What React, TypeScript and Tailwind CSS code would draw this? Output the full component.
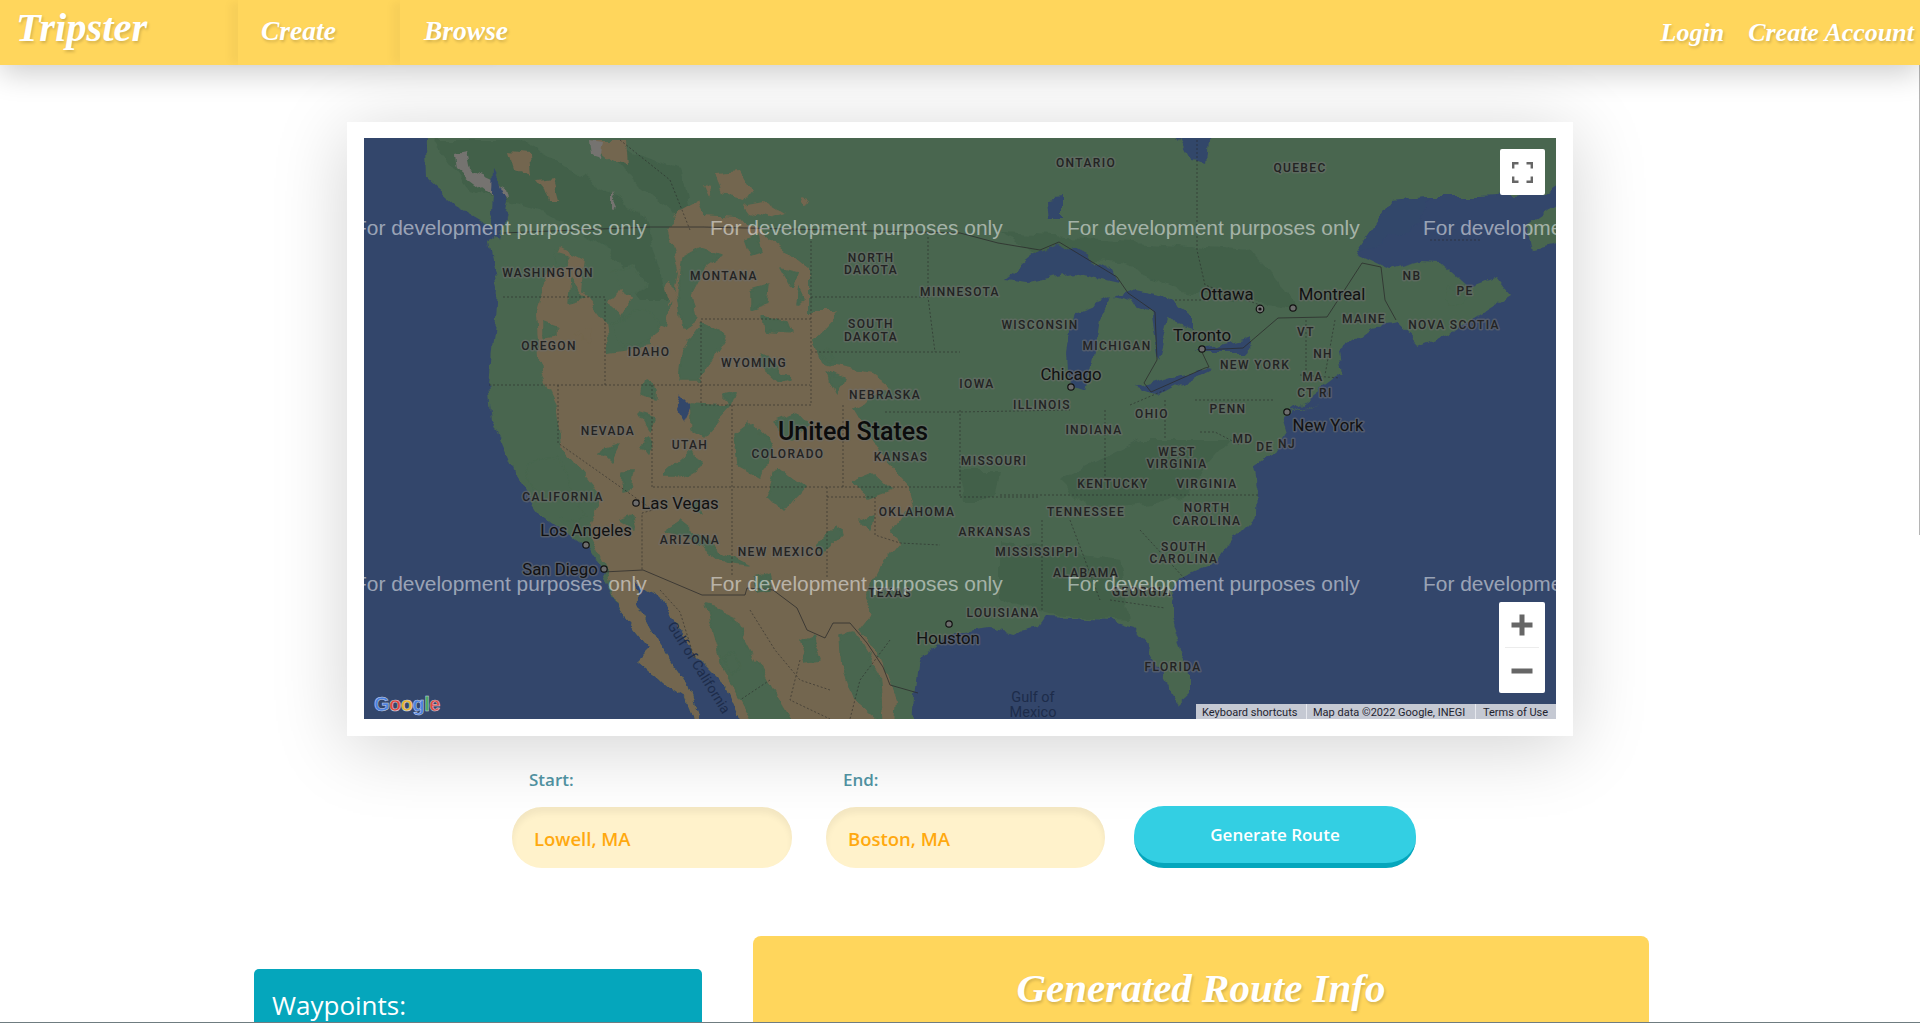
import React from "react";

const SCRIPT = { fontFamily: '"Liberation Serif", serif' };
const UI = { fontFamily: '"Open Sans", "Noto Sans", sans-serif' };

const ext = (pts: string) =>
  pts
    .split(" ")
    .map((p) => {
      const [x, y] = p.split(",").map(Number);
      return `${x >= 1556 ? 1580 : x},${y >= 719 ? 745 : y <= 138 ? 115 : y}`;
    })
    .join(" ");

const LAND = ext("426,138 428,180 458,207 503,233 487,245 497,287 495,320 489,383 493,420 510,460 520,483 540,513 567,533 587,547 603,573 620,613 650,650 638,662 667,687 687,700 700,719 707,719 687,683 660,643 637,600 633,580 643,590 663,600 677,630 697,657 727,687 750,719 910,719 913,697 917,667 923,653 950,633 987,627 1013,632 1040,627 1047,617 1110,620 1133,627 1150,647 1157,663 1177,705 1190,693 1190,673 1170,620 1170,600 1180,577 1217,560 1233,537 1257,513 1258,490 1253,467 1273,453 1287,430 1283,417 1320,400 1289,413 1343,373 1339,353 1373,327 1396,323 1419,347 1450,333 1511,295 1496,277 1469,287 1442,263 1419,262 1390,270 1354,253 1392,200 1430,197 1480,197 1545,193 1556,170 1556,138");

const TAN = ext("681,210 699,200 707,217 748,220 781,247 809,270 809,313 838,313 813,340 822,363 871,373 891,387 853,407 883,457 910,487 913,500 893,533 900,543 880,567 863,600 870,617 860,630 883,663 897,700 893,719 750,719 727,687 697,657 677,630 663,600 643,590 633,580 637,600 660,643 687,683 707,719 700,719 687,700 667,687 638,662 650,650 620,613 603,563 587,530 600,497 563,450 556,407 540,373 536,313 544,287 560,247 585,260 581,290 605,323 609,353 650,347 650,320 667,327 679,273 667,230");

const TAN_PATCHES = [
  "511,153 528,155 530,175 516,170",
  "536,180 552,178 558,200 548,200 544,190",
  "593,140 626,140 628,165 612,160 600,150",
  "715,172 740,170 752,190 745,200 722,195",
  "744,204 765,200 786,213 770,218 750,212",
  "703,184 712,186 708,195",
  "800,196 810,198 806,206",
  "610,300 625,285 632,300 620,318",
  "575,335 590,330 592,345",
  "665,290 672,280 676,300 668,305",
];
const GRAY = ["456,152 466,150 470,170 492,180 508,190 510,198 490,195 470,180 458,170", "590,140 605,142 602,158 592,155", "612,192 618,205 612,210"];
const GREEN_PATCHES = [
  "683,257 700,248 722,255 707,265 691,296 696,318 683,327 678,295",
  "701,322 726,335 715,353 699,380 680,380 684,345",
  "764,353 789,380 780,383 760,365",
  "762,316 786,322 790,332 764,330",
  "750,292 770,286 768,302 750,308",
  "609,325 640,310 660,322 648,342 622,346",
  "555,252 568,256 564,268 553,270",
  "545,322 556,326 556,336 545,338",
  "645,378 658,386 658,398 642,394",
  "735,435 750,424 772,445 760,478 738,466",
  "778,468 804,488 783,513 768,498",
  "663,477 693,450 700,463 677,477",
  "690,404 730,406 702,436 690,428",
  "600,450 618,444 610,460",
  "665,530 680,520 718,550 750,566 725,563 690,536",
  "704,605 731,612 760,667 793,725 755,725 722,667",
  "840,635 855,632 880,673 884,725 855,700 842,667",
  "524,462 558,456 572,490 586,518 565,522 532,490",
  "850,482 872,473 890,490 868,498",
  "623,472 634,472 631,488 622,490",
  "817,545 838,524 842,535 822,556",
  "772,422 798,412 812,428 790,438",
  "612,272 634,266 646,284 628,296",
  "830,372 843,379 838,393",
  "570,278 583,298 568,302",
  "799,287 805,299 796,303",
  "722,657 733,652 742,668 730,672",
  "640,445 650,440 648,456",
  "720,395 735,392 730,405",
  "860,520 872,515 870,530",
  "755,580 768,576 772,590 758,592",
  "640,415 655,420 650,432",
  "800,640 812,635 820,660 806,662",
  "745,240 758,236 762,250 750,254",
  "780,270 795,274 790,288",
  "820,355 832,348 836,362",
  "690,505 700,500 704,516",
  "620,520 632,515 636,530",
];
const DARK = [
  "434,140 520,140 640,210 668,300 640,300 610,250 540,210 470,190",
  "1000,234 1100,240 1250,250 1300,310 1180,290 1120,262 1040,255",
  "1060,480 1140,440 1230,440 1180,500 1090,510",
  "1000,540 1120,560 1130,620 1050,615 1000,600",
  "960,470 1000,470 995,500 965,500",
  "600,140 680,170 690,220 640,190",
];
const LAKES = [
  "1002,280 1040,250 1059,242 1113,270 1119,283 1075,273 1029,283",
  "1075,310 1113,295 1100,320 1094,357 1086,390 1071,387 1069,353",
  "1117,297 1151,310 1159,360 1170,320 1190,327 1190,313 1167,297 1132,290",
  "1138,387 1205,367 1209,368 1159,395",
  "1195,353 1243,340 1251,337 1243,353",
  "1167,115 1213,115 1209,163 1190,160",
  "1048,198 1062,196 1062,218 1050,218",
  "1419,223 1354,253 1392,200 1430,197",
  "680,395 690,405 683,420 675,408",
  "492,170 508,200 500,240 490,215",
];
const STATES = [
  "503,297 605,297 605,385", "489,385 810,385", "558,385 558,443 653,510 642,513 642,570", "652,385 652,487", "653,487 960,487", "732,405 732,577", "827,487 827,578", "843,405 843,487",
  "701,319 811,319 811,405 701,405 701,319", "811,233 811,319", "811,297 928,297 935,352", "811,352 960,352", "928,233 928,297", "827,497 875,497 875,535 900,543 940,545", "960,410 960,497", "960,497 1040,497", "885,412 960,412 1070,410",
  "1200,432 1215,432 1240,445", "1000,495 1260,495", "1042,520 1042,610", "1070,520 1100,600", "1140,530 1195,590", "1110,600 1165,608", "1105,410 1105,480", "1130,405 1165,390", "1165,400 1165,440", "1195,400 1275,400", "1306,320 1306,372", "1335,320 1325,375", "1300,375 1340,378", "1197,140 1197,250 1205,285 1260,305", "1175,300 1210,300", "1430,240 1480,240", "620,140 670,180 690,230", "750,610 775,650 800,680 830,690", "800,660 790,700 830,719", "660,590 680,612 695,660", "770,680 740,700", "890,640 860,680 850,719",
];
const BORDER = [
  "503,233 650,227 703,227 960,233 998,243 1040,250 1059,242 1117,277 1128,293 1155,312 1157,360 1144,383 1151,392 1205,368 1209,367 1201,350 1243,348 1278,318 1327,317 1362,263 1381,267 1385,300 1396,320",
  "603,572 643,570 702,595 745,595 747,588 773,590 797,608 807,630 825,638 833,623 850,623 867,643 883,667 890,685 918,693",
];
const STATE_LABELS: [string, number, number][] = [
  ["ONTARIO", 1086, 167], ["QUEBEC", 1300, 172], ["WASHINGTON", 548, 277], ["MONTANA", 724, 280], ["NORTH", 871, 262], ["DAKOTA", 871, 274], ["MINNESOTA", 960, 296], ["OREGON", 549, 350], ["IDAHO", 649, 356], ["WYOMING", 754, 367], ["SOUTH", 871, 328], ["DAKOTA", 871, 341], ["NEBRASKA", 885, 399], ["IOWA", 977, 388], ["WISCONSIN", 1040, 329], ["MICHIGAN", 1117, 350], ["VT", 1306, 336], ["MAINE", 1364, 323], ["NB", 1412, 280], ["PE", 1465, 295], ["NOVA SCOTIA", 1454, 329], ["NEW YORK", 1255, 369], ["NH", 1323, 358], ["MA", 1313, 381], ["CT RI", 1315, 397], ["ILLINOIS", 1042, 409], ["OHIO", 1152, 418], ["PENN", 1228, 413], ["INDIANA", 1094, 434], ["MD", 1243, 443], ["DE", 1265, 451], ["NJ", 1287, 448], ["WEST", 1177, 456], ["VIRGINIA", 1177, 468], ["KENTUCKY", 1113, 488], ["VIRGINIA", 1207, 488], ["TENNESSEE", 1086, 516], ["NORTH", 1207, 512], ["CAROLINA", 1207, 525], ["SOUTH", 1184, 551], ["CAROLINA", 1184, 563], ["ARKANSAS", 995, 536], ["MISSISSIPPI", 1037, 556], ["ALABAMA", 1086, 577], ["GEORGIA", 1142, 596], ["LOUISIANA", 1003, 617], ["FLORIDA", 1173, 671], ["TEXAS", 890, 597], ["OKLAHOMA", 917, 516], ["MISSOURI", 994, 465], ["KANSAS", 901, 461], ["COLORADO", 788, 458], ["UTAH", 690, 449], ["NEVADA", 608, 435], ["CALIFORNIA", 563, 501], ["ARIZONA", 690, 544], ["NEW MEXICO", 781, 556],
];
const CITIES: [string, number, number][] = [
  ["Ottawa", 1227, 300], ["Montreal", 1332, 300], ["Toronto", 1202, 341], ["Chicago", 1071, 380], ["New York", 1328, 431], ["Las Vegas", 680, 509], ["Los Angeles", 586, 536], ["San Diego", 560, 575], ["Houston", 948, 644],
];
const DOTS: [number, number][] = [[1293, 308], [1202, 349], [1071, 387], [1287, 412], [636, 503], [586, 545], [604, 569], [949, 624]];
const WATERMARKS: [number, number][] = [[354, 235], [710, 235], [1067, 235], [1423, 235], [354, 591], [710, 591], [1067, 591], [1423, 591]];

const halo = { paintOrder: "stroke" } as React.CSSProperties;

function MapDrawing() {
  return (
    <svg viewBox="364 138 1192 581" className="block h-full w-full" fontFamily="Roboto, sans-serif">
      <defs>
        <filter id="soft" filterUnits="userSpaceOnUse" x="340" y="100" width="1260" height="660">
          <feTurbulence type="fractalNoise" baseFrequency="0.05" numOctaves="3" seed="4" result="n" />
          <feDisplacementMap in="SourceGraphic" in2="n" scale="13" xChannelSelector="R" yChannelSelector="G" />
          <feGaussianBlur stdDeviation="0.6" />
        </filter>
        <filter id="mottle" filterUnits="userSpaceOnUse" x="340" y="100" width="1260" height="660">
          <feTurbulence type="fractalNoise" baseFrequency="0.035" numOctaves="4" seed="9" />
          <feColorMatrix type="matrix" values="0 0 0 0 0.1  0 0 0 0 0.16  0 0 0 0 0.12  1.6 0 0 0 -0.72" />
        </filter>
      </defs>
      <rect x="364" y="138" width="1192" height="581" fill="#33466b" />
      <g filter="url(#soft)" strokeLinejoin="round">
        <polygon points={LAND} fill="#48664f" />
        <polygon points="1530,225 1580,190 1580,240 1535,250" fill="#48664f" />
        {DARK.map((p, i) => <polygon key={i} points={ext(p)} fill="#42604a" />)}
        <polygon points={TAN} fill="#73664f" />
        {TAN_PATCHES.map((p, i) => <polygon key={i} points={p} fill="#73664f" />)}
        {GREEN_PATCHES.map((p, i) => <polygon key={i} points={p} fill="#48664f" stroke="#48664f" strokeWidth="1.5" />)}
        {GRAY.map((p, i) => <polygon key={i} points={p} fill="#75736f" />)}
        {LAKES.map((p, i) => <polygon key={i} points={p} fill="#33466b" />)}
        <polygon points="1447,287 1470,296 1462,305 1445,300" fill="#48664f" />
      </g>
      {STATES.map((p, i) => <polyline key={i} points={p} fill="none" stroke="#262626" strokeOpacity="0.55" strokeWidth="1" strokeDasharray="2 2" />)}
      {BORDER.map((p, i) => <polyline key={i} points={p} fill="none" stroke="#2b2b2b" strokeOpacity="0.75" strokeWidth="1" />)}
      {STATE_LABELS.map(([t, x, y], i) => (
        <text key={i} x={x} y={y} textAnchor="middle" fontSize="12" fontWeight="500" letterSpacing="1.35" fill="#232323" stroke="#6e6e6e" strokeOpacity="0.55" strokeWidth="3" strokeLinejoin="round" style={halo}>{t}</text>
      ))}
      {CITIES.map(([t, x, y], i) => (
        <text key={i} x={x} y={y} textAnchor="middle" fontSize="16.8" fill="#111" stroke="#6e6e6e" strokeOpacity="0.55" strokeWidth="3" strokeLinejoin="round" style={halo}>{t}</text>
      ))}
      {DOTS.map(([x, y], i) => <circle key={i} cx={x} cy={y} r="3.2" fill="#6d6d6d" stroke="#111" strokeWidth="1.2" />)}
      <circle cx="1260" cy="309" r="3.8" fill="#777" stroke="#111" strokeWidth="1.2" />
      <circle cx="1260" cy="309" r="1.6" fill="#111" />
      <text x="853" y="440" textAnchor="middle" fontSize="25" fontWeight="500" stroke="#6e6e6e" strokeOpacity="0.5" strokeWidth="3" strokeLinejoin="round" fill="#0c0c0c" style={halo}>United States</text>
      <text transform="translate(695 670) rotate(58)" textAnchor="middle" fontSize="14" fill="#1d2c4a">Gulf of California</text>
      <text x="1033" y="702" textAnchor="middle" fontSize="14.5" fill="#1d2c4a">Gulf of</text>
      <text x="1033" y="717" textAnchor="middle" fontSize="14.5" fill="#1d2c4a">Mexico</text>
      {WATERMARKS.map(([x, y], i) => (
        <text key={i} x={x} y={y} fontFamily='"Liberation Sans", sans-serif' fontSize="20.9" fill="#ffffff" fillOpacity="0.52">For development purposes only</text>
      ))}
    </svg>
  );
}

function GoogleLogo() {
  const letters: [string, string][] = [["G", "#4a7fe0"], ["o", "#e2483d"], ["o", "#e8b32c"], ["g", "#4a7fe0"], ["l", "#3fa757"], ["e", "#e2483d"]];
  return (
    <div className="absolute bottom-[3px] left-[10px] text-[20px] font-bold leading-[24px] tracking-[-0.5px]" style={{ fontFamily: '"Liberation Sans", sans-serif', WebkitTextStroke: "0.5px #cdd6e4" }}>
      {letters.map(([c, col], i) => <span key={i} style={{ color: col }}>{c}</span>)}
    </div>
  );
}

function MapControls() {
  return (
    <>
      <button className="absolute right-[11px] top-[11px] flex h-[46px] w-[45px] items-center justify-center rounded-[2px] bg-white">
        <svg width="21" height="21" viewBox="0 0 21 21" fill="none" stroke="#666" strokeWidth="2.4">
          <path d="M1.2 6.5V1.2H6.5M14.5 1.2H19.8V6.5M19.8 14.5V19.8H14.5M6.5 19.8H1.2V14.5" />
        </svg>
      </button>
      <div className="absolute bottom-[26px] right-[11px] flex h-[91px] w-[46px] flex-col items-center rounded-[2px] bg-white">
        <div className="flex h-[45px] items-center justify-center">
          <svg width="22" height="22" viewBox="0 0 22 22" fill="#666"><path d="M8.5 0.5h5v8h8v5h-8v8h-5v-8h-8v-5h8z" /></svg>
        </div>
        <div className="h-px w-[34px] bg-[#ececec]" />
        <div className="flex h-[45px] items-center justify-center">
          <svg width="22" height="6" viewBox="0 0 22 6" fill="#666"><rect x="0.5" y="0.5" width="21" height="5" /></svg>
        </div>
      </div>
      <div className="absolute bottom-0 right-0 flex h-[15px] items-start overflow-hidden bg-[#c5c9d3] text-[11px] leading-[18px] text-[#1f2430]" style={{ fontFamily: "Roboto, sans-serif" }}>
        <span className="h-[15px] w-[111px] border-r border-[#e6e8ee] pl-[6px]">Keyboard shortcuts</span>
        <span className="h-[15px] w-[169px] whitespace-nowrap border-r border-[#e6e8ee] pl-[6px]">Map data ©2022 Google, INEGI</span>
        <span className="h-[15px] w-[80px] whitespace-nowrap pl-[7px]">Terms of Use</span>
      </div>
    </>
  );
}

function NavLink({ children, className }: { children: React.ReactNode; className: string }) {
  return (
    <a className={`font-bold italic text-white [text-shadow:1px_2px_3px_rgba(0,0,0,0.18)] ${className}`} style={SCRIPT}>
      {children}
    </a>
  );
}

export default function App() {
  return (
    <div className="relative h-screen overflow-hidden bg-white" style={UI}>
      <nav className="relative z-10 flex h-[65px] items-stretch bg-[#ffd65c] shadow-[0_8px_30px_rgba(0,0,0,0.2)]">
        <div className="flex w-[238px] items-center pl-[16px] pb-[8px]">
          <NavLink className="text-[40.5px] leading-none">Tripster</NavLink>
        </div>
        <div className="flex w-[162px] items-center pl-[23px] pb-[3px] shadow-[-10px_0_8px_-2px_rgba(0,0,0,0.035)]">
          <NavLink className="text-[27.5px] leading-none">Create</NavLink>
        </div>
        <div className="flex items-center pl-[24px] pb-[3px] shadow-[-10px_0_8px_-2px_rgba(0,0,0,0.035)]">
          <NavLink className="text-[27.5px] leading-none">Browse</NavLink>
        </div>
        <div className="ml-auto flex items-center gap-[24px] pr-[6px]">
          <NavLink className="text-[26px] leading-none">Login</NavLink>
          <NavLink className="text-[26px] leading-none">Create Account</NavLink>
        </div>
      </nav>

      <main>
        <div className="mx-auto mt-[57px] w-[1226px] bg-white p-[17px] pt-[16px] shadow-[0_10px_70px_rgba(0,0,0,0.18)]">
          <div className="relative h-[581px] w-[1192px] overflow-hidden">
            <MapDrawing />
            <GoogleLogo />
            <MapControls />
          </div>
        </div>

        <div className="mt-[33px] flex items-end justify-center pl-[8px]">
          <label className="mr-[34px] block w-[280px]">
            <span className="mb-[16px] block pl-[17px] text-[17px] font-semibold leading-[22px] text-[#4f909f]">Start:</span>
            <input readOnly value="Lowell, MA" className="block h-[61px] w-full rounded-[30px] bg-[#fff2cb] pl-[22px] pt-[2px] text-[18.5px] font-semibold text-[#ffa90f] shadow-[inset_0_6px_6px_rgba(0,0,0,0.05)] outline-none" />
          </label>
          <label className="mr-[29px] block w-[279px]">
            <span className="mb-[16px] block pl-[17px] text-[17px] font-semibold leading-[22px] text-[#4f909f]">End:</span>
            <input readOnly value="Boston, MA" className="block h-[61px] w-full rounded-[30px] bg-[#fff2cb] pl-[22px] pt-[2px] text-[18.5px] font-semibold text-[#ffa90f] shadow-[inset_0_6px_6px_rgba(0,0,0,0.05)] outline-none" />
          </label>
          <button className="h-[62px] w-[282px] rounded-[30px] border-b-[5px] border-[#05a6bc] bg-[#33cfe3] pt-[1px] text-[17px] font-semibold text-white">
            Generate Route
          </button>
        </div>

        <div className="mt-[68px] flex items-start gap-[51px] pl-[254px]">
          <section className="mt-[33px] h-[200px] w-[448px] rounded-[5px] bg-[#05a6bc] px-[18px] pt-[18px]">
            <h2 className="text-[26px] leading-[36px] text-white">Waypoints:</h2>
          </section>
          <section className="h-[240px] w-[896px] rounded-[8px] bg-[#ffd65c] pt-[24px] text-center">
            <h1 className="text-[41px] font-bold italic leading-[56px] text-white [text-shadow:1px_2px_3px_rgba(0,0,0,0.18)]" style={SCRIPT}>
              Generated Route Info
            </h1>
          </section>
        </div>
      </main>

      <div className="absolute right-0 top-[65px] h-[470px] w-px bg-[#b5b5b5]" />
      <div className="absolute bottom-0 left-0 h-px w-full bg-[#6f7c80]" />
    </div>
  );
}
